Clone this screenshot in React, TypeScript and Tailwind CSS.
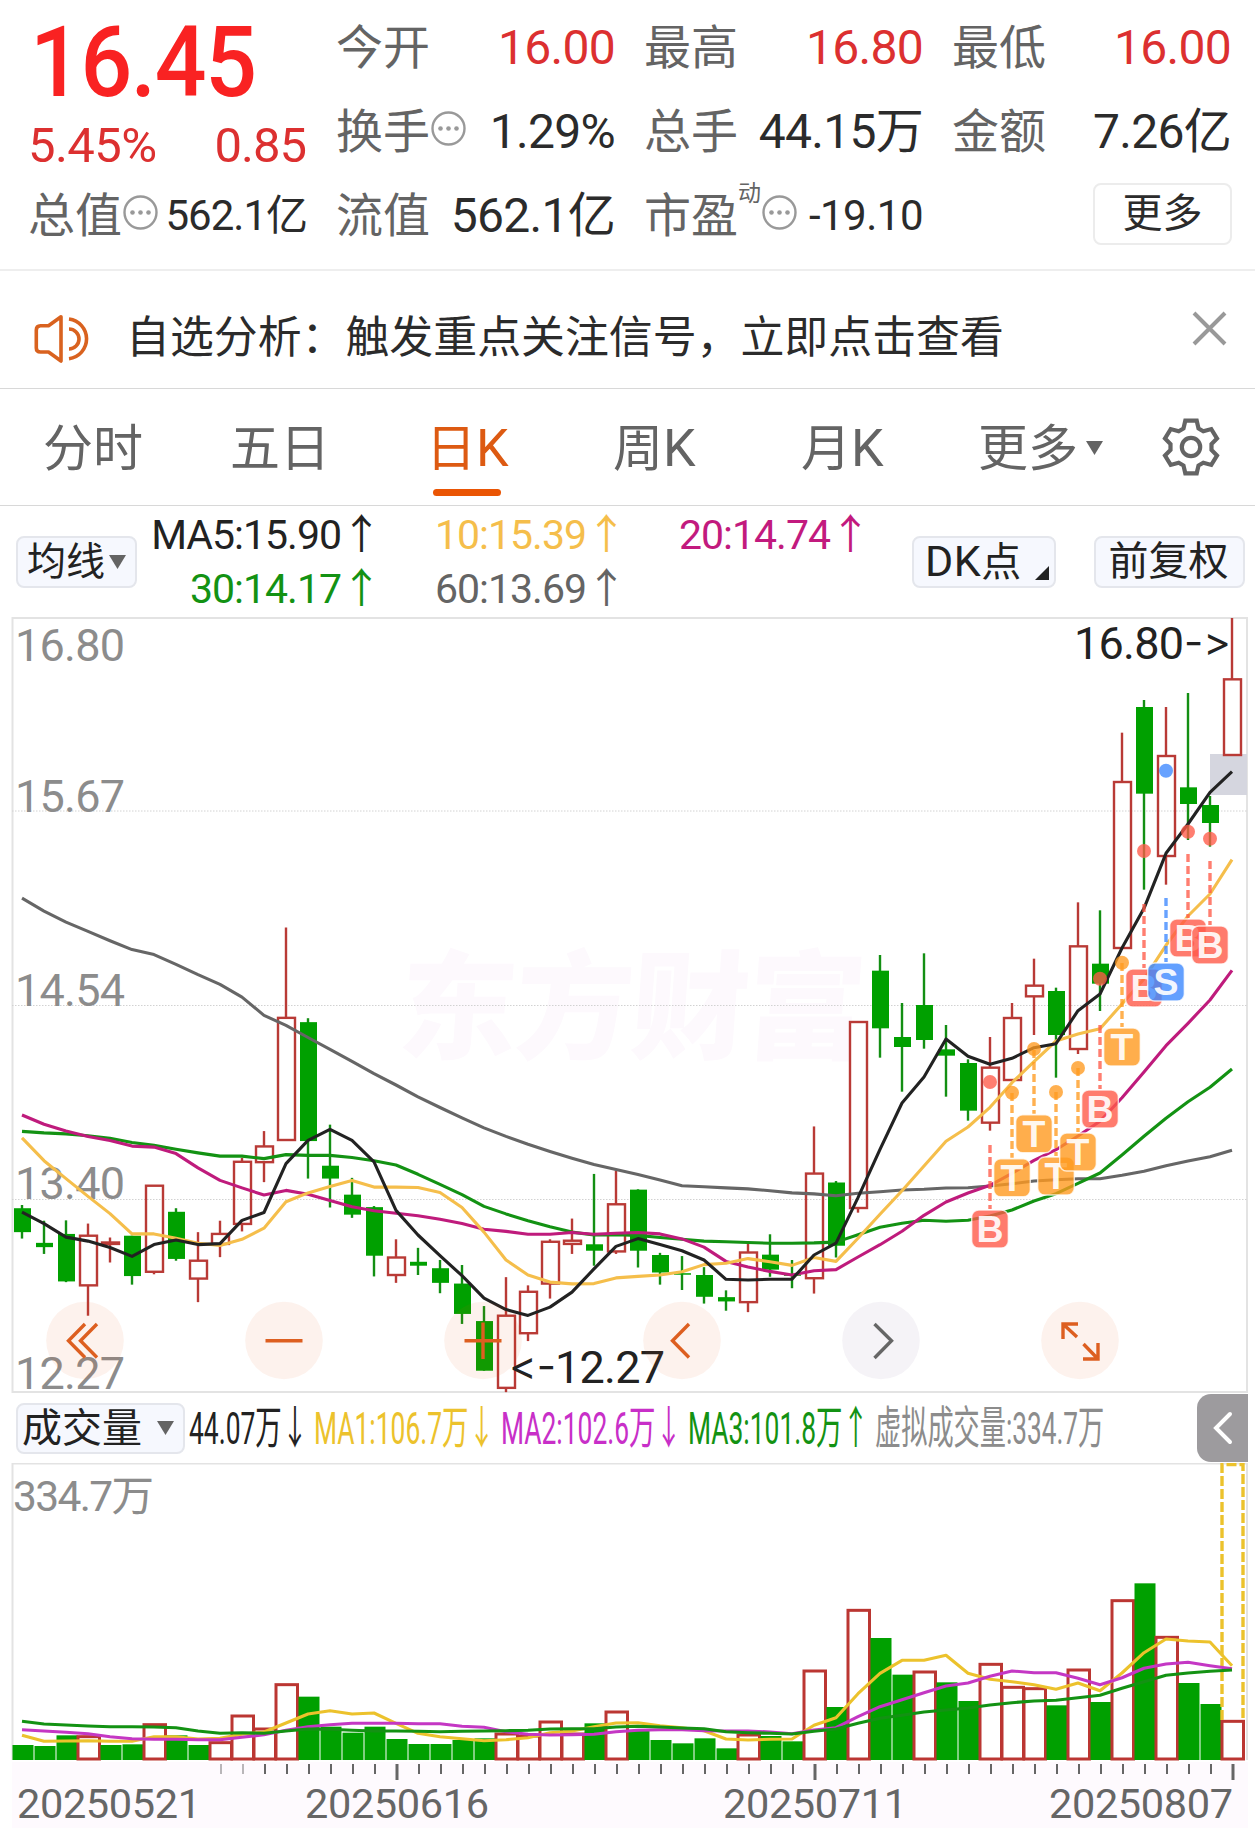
import type { ReactNode } from 'react';

const STEP = 22;
const cx = (i: number) => 22 + i * STEP;

// measured rows -> canvas y
const scale = (origin: number, k: number) => (v: number) => origin + v / k;
const lo = scale(850, 2.8);
const mid = scale(900, 3);
const hi = scale(600, 3);
const vy = scale(1380, 3);

// [type, high, bodyTop, bodyBottom, low]
type Candle = ['r' | 'g', number, number, number, number];

const conv = (f: (v: number) => number, rows: Candle[]): Candle[] =>
  rows.map(([t, a, b, c, d]) => [t, f(a), f(b), f(c), f(d)]);

const candles: Candle[] = [
  ...conv(lo, [
    ['g', 994, 1003, 1070, 1088],
    ['g', 1038, 1100, 1112, 1131],
    ['g', 1037, 1075, 1208, 1210],
    ['r', 1046, 1080, 1219, 1304],
    ['r', 1085, 1099, 1103, 1155],
    ['g', 1080, 1080, 1193, 1217],
    ['r', 938, 940, 1181, 1188],
    ['g', 1003, 1013, 1145, 1150],
    ['r', 1070, 1150, 1200, 1266],
    ['r', 1038, 1075, 1103, 1140],
    ['r', 862, 873, 1047, 1068],
    ['r', 787, 830, 874, 930],
    ['r', 217, 470, 812, 812],
    ['g', 471, 482, 815, 920],
    ['g', 769, 884, 920, 1001],
    ['g', 918, 965, 1021, 1030],
    ['g', 997, 1000, 1136, 1194],
    ['r', 1090, 1141, 1190, 1212],
    ['g', 1114, 1153, 1164, 1190],
    ['g', 1148, 1171, 1212, 1241],
    ['g', 1162, 1214, 1299, 1327],
    ['g', 1277, 1319, 1458, 1458],
    ['r', 1196, 1304, 1506, 1518],
    ['r', 1219, 1237, 1353, 1375],
    ['r', 1090, 1097, 1214, 1256],
    ['r', 1032, 1094, 1103, 1131],
    ['g', 907, 1104, 1122, 1164],
    ['r', 898, 992, 1124, 1131],
    ['g', 950, 951, 1122, 1169],
    ['g', 1128, 1134, 1183, 1217],
    ['g', 1137, 1185, 1189, 1232],
    ['g', 1168, 1190, 1251, 1270],
    ['g', 1233, 1252, 1264, 1290],
    ['r', 1103, 1127, 1266, 1294],
    ['g', 1076, 1133, 1175, 1195],
    ['g', 1148, 1188, 1191, 1227],
    ['r', 774, 906, 1199, 1242],
    ['g', 927, 931, 1108, 1141],
  ]),
  ...conv(mid, [
    ['r', 366, 366, 924, 938],
    ['g', 165, 212, 385, 473],
    ['g', 309, 411, 441, 575],
    ['g', 160, 315, 420, 446],
    ['g', 375, 448, 467, 590],
    ['g', 478, 489, 632, 662],
    ['r', 411, 503, 668, 692],
    ['r', 309, 354, 540, 541],
    ['r', 176, 257, 289, 405],
    ['g', 263, 273, 405, 533],
    ['r', 7, 139, 447, 462],
    ['g', 31, 191, 251, 333],
  ]),
  ...conv(hi, [
    ['r', 398, 546, 1044, 1046],
    ['g', 300, 321, 581, 869],
    ['r', 321, 468, 768, 854],
    ['g', 279, 562, 612, 720],
    ['g', 588, 615, 669, 740],
    ['r', 54, 238, 465, 465],
  ]),
];

const maLines = [
  {
    color: '#222222',
    ys: [
      ...[1014, 1046, 1084, 1095, 1113, 1138, 1105, 1092, 1105, 1102, 1037, 1015, 878, 813, 782, 813, 873, 1009, 1078, 1136, 1192, 1255, 1287, 1303, 1280, 1238, 1173, 1110, 1088, 1105, 1122, 1148, 1202, 1204, 1202, 1202, 1134, 1101].map(lo),
      ...[893, 748, 609, 531, 417, 469, 493, 475, 443, 431, 332, 282].map(mid),
      ...[1044, 925, 760, 672, 577, 515].map(hi),
    ],
  },
  {
    color: '#f5be4b',
    ys: [
      ...[806, 870, 920, 970, 1018, 1075, 1075, 1087, 1101, 1107, 1090, 1059, 985, 960, 942, 925, 944, 944, 945, 959, 1001, 1070, 1148, 1190, 1210, 1215, 1214, 1198, 1194, 1190, 1181, 1161, 1157, 1144, 1153, 1163, 1141, 1152].map(lo),
      ...[1015, 943, 872, 798, 724, 681, 622, 548, 485, 423, 402, 386].map(mid),
      ...[1212, 1137, 1036, 948, 882, 779].map(hi),
    ],
  },
  {
    color: '#bf1b7c',
    ys: [
      ...[742, 768, 787, 802, 813, 829, 832, 850, 890, 925, 946, 966, 953, 964, 981, 999, 1010, 1017, 1024, 1034, 1046, 1062, 1068, 1076, 1076, 1071, 1076, 1073, 1071, 1075, 1089, 1112, 1152, 1168, 1180, 1190, 1178, 1175].map(lo),
      ...[1071, 1034, 994, 946, 906, 879, 856, 820, 781, 749, 708, 664, 593, 516, 437, 370, 300, 211].map(mid),
    ],
  },
  {
    color: '#139213',
    ys: [
      ...[788, 792, 795, 800, 807, 819, 827, 838, 848, 857, 857, 864, 853, 855, 855, 861, 870, 882, 908, 936, 965, 998, 1019, 1038, 1055, 1070, 1078, 1077, 1079, 1085, 1090, 1095, 1097, 1099, 1101, 1101, 1100, 1098].map(lo),
      ...[1004, 982, 970, 961, 964, 961, 948, 930, 903, 881, 850, 819, 765, 709, 655, 605, 562, 507].map(mid),
    ],
  },
  {
    color: '#666666',
    ys: [
      ...[135, 171, 202, 228, 254, 279, 293, 320, 349, 376, 412, 463, 491, 525, 558, 592, 626, 658, 691, 721, 750, 778, 802, 824, 844, 863, 881, 895, 909, 924, 940, 943, 946, 949, 954, 960, 963, 968].map(lo),
      ...[880, 875, 870, 868, 864, 863, 858, 851, 843, 839, 836, 836, 826, 814, 797, 783, 770, 751].map(mid),
    ],
  },
];

const volumes = [
  1095, 1098, 1066, 1070, 1095, 1093, 1034, 1066, 1095, 1088, 1008, 1047, 914, 950, 1040, 1058, 1040, 1077, 1092, 1092,
  1080, 1075, 1062, 1068, 1026, 1062, 1030, 996, 1052, 1080, 1090, 1075, 1105, 1065, 1068, 1084, 873, 981, 691, 774,
  884, 876, 907, 963, 853, 922, 926, 976, 870, 966, 662, 610, 772, 909, 972, 1024,
].map(vy);

const volumeUp = [3, 6, 9, 10, 11, 12, 22, 23, 24, 25, 27, 33, 36, 38, 41, 44, 45, 46, 48, 50, 52, 55];

const volLines = [
  {
    color: '#ecc22c',
    ys: [1066, 1084, 1083, 1082, 1084, 1084, 1070, 1070, 1077, 1075, 1063, 1056, 1029, 1002, 992, 1002, 999, 1030, 1060, 1070, 1076, 1082, 1079, 1073, 1058, 1053, 1040, 1029, 1028, 1037, 1043, 1052, 1077, 1080, 1078, 1077, 1036, 1013, 941, 880, 841, 841, 826, 880, 898, 905, 914, 928, 909, 932, 879, 818, 777, 783, 786, 857],
  },
  {
    color: '#c437c4',
    ys: [1049, 1053, 1057, 1061, 1070, 1076, 1078, 1078, 1079, 1079, 1072, 1064, 1051, 1040, 1034, 1030, 1030, 1030, 1031, 1031, 1039, 1042, 1055, 1063, 1065, 1064, 1063, 1055, 1051, 1049, 1049, 1052, 1053, 1053, 1056, 1061, 1050, 1043, 1010, 980, 959, 938, 918, 909, 889, 873, 878, 878, 895, 914, 893, 865, 852, 847, 857, 866],
  },
  {
    color: '#139213',
    ys: [1024, 1032, 1035, 1038, 1040, 1040, 1041, 1043, 1053, 1060, 1058, 1060, 1053, 1047, 1048, 1051, 1053, 1053, 1054, 1055, 1054, 1053, 1052, 1051, 1047, 1046, 1046, 1041, 1039, 1041, 1044, 1046, 1055, 1058, 1060, 1062, 1054, 1047, 1030, 1015, 1006, 996, 990, 984, 975, 968, 963, 961, 953, 946, 925, 905, 886, 879, 874, 870],
  },
];

// [index, letter, dotY, dashTop, badgeY]
const signals: [number, string, number, number, number][] = [
  [44, 'B', 1082, 1145, 1229],
  [45, 'T', 1092.7, 1093, 1177.7],
  [46, 'T', 1049, 1050, 1133.7],
  [47, 'T', 1092, 1092, 1176],
  [48, 'T', 1068, 1068, 1152],
  [49, 'B', 978.7, 1025, 1109],
  [50, 'T', 962.7, 963, 1047],
  [51, 'B', 851, 904, 988],
  [52, 'S', 770.7, 898, 982],
  [53, 'B', 831.7, 854, 938],
  [54, 'B', 838.7, 861, 945],
];

const signalColor: Record<string, string> = { B: '#ff5a48', T: '#ff9a1f', S: '#3c88ff' };

const points = (ys: number[]) => ys.map((y, i) => `${cx(i)},${y.toFixed(1)}`).join(' ');

function Dots() {
  return (
    <svg className="mb-[7px] ml-[1px] h-[35px] w-[35px] shrink-0" viewBox="0 0 35 35">
      <circle cx="17.5" cy="17.5" r="16" fill="none" stroke="#999" strokeWidth="2.4" />
      <circle cx="9.5" cy="17.5" r="2.3" fill="#999" />
      <circle cx="17.5" cy="17.5" r="2.3" fill="#999" />
      <circle cx="25.5" cy="17.5" r="2.3" fill="#999" />
    </svg>
  );
}

function Stat({ label, value, valueClass = 'text-[48px] text-[#2b2b2b] tracking-[-0.7px]', dots, sup }: {
  label: string;
  value: string;
  valueClass?: string;
  dots?: boolean;
  sup?: string;
}) {
  return (
    <div className="flex h-[84px] items-center justify-between whitespace-nowrap leading-[84px]">
      <div className="flex items-center text-[47px] text-[#646464]">
        <span>{label}</span>
        {sup && <span className="mb-[44px] text-[23px] leading-[30px]">{sup}</span>}
        {dots && <Dots />}
      </div>
      <span className={valueClass}>{value}</span>
    </div>
  );
}

function Tab({ children, className }: { children: ReactNode; className: string }) {
  return <div className={`flex h-full shrink-0 items-center ${className}`}>{children}</div>;
}

function Fit({ children, box, text }: { children: ReactNode; box: string; text: string }) {
  return (
    <div className={`shrink-0 ${box}`}>
      <span className={`inline-block origin-left whitespace-nowrap ${text}`}>{children}</span>
    </div>
  );
}

function PriceChart() {
  return (
    <svg className="block h-[776px] w-[1255px] overflow-visible" viewBox="0 617 1255 776">
      <text x="398" y="1050" fontSize="118" fontWeight="900" fill="#fdf9fd" textLength="466" transform="skewX(-4) translate(72 0)">东方财富</text>
      <rect x="12.5" y="618" width="1234.5" height="774" fill="none" stroke="#e3e3e3" strokeWidth="2" />
      {[811, 1005.5, 1199.5].map((y) => (
        <line key={y} x1="12" x2="1247" y1={y} y2={y} stroke="#d2d2d2" strokeWidth="1" strokeDasharray="1.5 1.5" />
      ))}
      <g fontSize="45" fill="#8c8c8c">
        <text x="15" y="661" textLength="110">16.80</text>
        <text x="15" y="812" textLength="110">15.67</text>
        <text x="15" y="1006" textLength="110">14.54</text>
        <text x="15" y="1198.5" textLength="110">13.40</text>
        <text x="15" y="1388.5" textLength="110">12.27</text>
      </g>
      <rect x="1210" y="754" width="37" height="41" fill="#d5d6df" />

      {candles.map(([t, high, top, bottom, low], i) => {
        const x = cx(i);
        if (t === 'g') {
          return (
            <g key={i} fill="#00a000">
              <rect x={x - 1.2} y={high} width="2.4" height={low - high} fill="#138f13" />
              <rect x={x - 8} y={top} width="17" height={Math.max(bottom - top, 1.5)} />
            </g>
          );
        }
        return (
          <g key={i} fill="none" stroke="#b93a36" strokeWidth="2.4">
            <line x1={x} x2={x} y1={high} y2={top} />
            <line x1={x} x2={x} y1={bottom} y2={low} />
            <rect x={x - 8} y={top} width="17" height={bottom - top} />
          </g>
        );
      })}

      {[...maLines].reverse().map((l) => (
        <polyline key={l.color} points={points(l.ys)} fill="none" stroke={l.color} strokeWidth="3.1" strokeLinejoin="round" />
      ))}

      {signals.map(([i, letter, dotY, dashTop, badgeY]) => {
        const x = cx(i);
        const color = signalColor[letter];
        return (
          <g key={i}>
            <circle cx={x} cy={dotY} r="7" fill={color} fillOpacity="0.78" />
            <line x1={x} x2={x} y1={dashTop} y2={badgeY - 20} stroke={color} strokeOpacity="0.78" strokeWidth="3.4" strokeDasharray="8 4" />
            <rect x={x - 18.3} y={badgeY - 19} width="36.6" height="38" rx="7" fill={color} fillOpacity="0.8" stroke="#fff" strokeOpacity="0.75" strokeWidth="1.4" />
            <text x={x} y={badgeY + 13.3} textAnchor="middle" fontSize="37.5" fontWeight="700" fill="#fff" fillOpacity="0.92" fontFamily="Liberation Sans, sans-serif">{letter}</text>
          </g>
        );
      })}

      <g fill="#222" fontSize="45">
        <text x="1074" y="659" textLength="110">16.80</text>
        <text className="[font-feature-settings:'calt'_0,'liga'_0]" x="1184" y="656" fontSize="40" textLength="47" lengthAdjust="spacingAndGlyphs" fontFamily="Inter, sans-serif">-&gt;</text>
        <text className="[font-feature-settings:'calt'_0,'liga'_0]" x="509" y="1380" fontSize="40" textLength="47" lengthAdjust="spacingAndGlyphs" fontFamily="Inter, sans-serif">&lt;-</text>
        <text x="555" y="1383" textLength="110">12.27</text>
      </g>

      {/* floating chart controls */}
      {[85, 284, 483, 682, 1080].map((x) => (
        <circle key={x} cx={x} cy="1340.5" r="38.8" fill="#e8500a" fillOpacity="0.075" />
      ))}
      <circle cx="881" cy="1340.5" r="38.8" fill="#4a2a6a" fillOpacity="0.055" />
      <g fill="none" stroke="#dd5f20" strokeWidth="3.4">
        <path d="M85 1324 L68.5 1340.7 L85 1357.5 M97 1324 L80.5 1340.7 L97 1357.5" />
        <path d="M265.5 1340.7 H302.5" />
        <path d="M464.5 1340.7 H501.5 M483 1322.5 V1359" />
        <path d="M689 1324 L672.5 1340.7 L689 1357.5" />
        <path d="M874.5 1324 L891.5 1340.7 L874.5 1358" stroke="#666" />
        <path d="M1078 1324 H1063 V1339 M1063 1324 L1077 1337 M1083 1359 H1098 V1343 M1098 1359 L1083.5 1344" />
      </g>
    </svg>
  );
}

function VolumeChart() {
  return (
    <svg className="block h-[365px] w-[1255px]" viewBox="0 1463 1255 365">
      <rect x="12" y="1762" width="1236" height="66" fill="#fefafe" />
      <path d="M12.5 1760 V1463.5 H1247 V1760" fill="none" stroke="#e3e3e3" strokeWidth="2" />
      <text x="13" y="1511" fontSize="42.5" fill="#8c8c8c" textLength="141">334.7万</text>

      {volumes.map((y, i) =>
        volumeUp.includes(i) ? (
          <rect key={i} x={cx(i) - 10} y={y} width="21.5" height={1759 - y} fill="#fff" stroke="#bb3632" strokeWidth="3" />
        ) : (
          <rect key={i} x={cx(i) - 9.5} y={y} width="21" height={1760 - y} fill="#00a000" />
        ),
      )}
      <path d="M1222 1720 V1464.5 H1243 V1720" fill="none" stroke="#ecc22c" strokeWidth="3.4" strokeDasharray="10 3" />

      {volLines.map((l) => (
        <polyline key={l.color} points={points(l.ys.map(vy))} fill="none" stroke={l.color} strokeWidth="3.1" strokeLinejoin="round" />
      ))}

      {volumes.map((_, i) => {
        if (i < 9) return null;
        const major = i === 17 || i === 36 || i === 55;
        return (
          <line
            key={i}
            x1={cx(i) + 1}
            x2={cx(i) + 1}
            y1="1764"
            y2={major ? 1780 : 1774}
            stroke="#666"
            strokeWidth={major ? 3 : 2}
            opacity={i < 11 ? 0.45 : 1}
          />
        );
      })}
      <g fontSize="41.5" fill="#666">
        <text x="17" y="1818" textLength="184">20250521</text>
        <text x="305" y="1818" textLength="184">20250616</text>
        <text x="723" y="1818" textLength="184">20250711</text>
        <text x="1049" y="1818" textLength="184">20250807</text>
      </g>
    </svg>
  );
}

export default function App() {
  return (
    <div className="h-[1828px] w-[1255px] overflow-hidden bg-white font-['Roboto','Noto_Sans_CJK_SC',sans-serif]">
      {/* quote header */}
      <header className="grid h-[271px] grid-cols-[279px_279px_279px_279px] gap-x-[29px] border-b-2 border-[#eeeeee] pl-[28px] pt-[6px]">
        <div>
          <div className="h-[112px] pl-[2px] pt-[2px] leading-[110px]">
            <span className="inline-block origin-left scale-x-[0.93] text-[98px] font-medium leading-[110px] tracking-[-1.5px] text-[#f92222]">16.45</span>
          </div>
          <div className="flex h-[56px] items-center justify-between text-[49px] leading-[56px] text-[#dc3030]">
            <span className="tracking-[-0.6px]">5.45%</span>
            <span className="pr-[1px] tracking-[-1px]">0.85</span>
          </div>
          <Stat label="总值" value="562.1亿" dots valueClass="text-[42px] text-[#2b2b2b] tracking-[-1px]" />
        </div>
        <div>
          <Stat label="今开" value="16.00" valueClass="text-[48px] text-[#dc3030] tracking-[-0.7px]" />
          <Stat label="换手" value="1.29%" dots valueClass="text-[48px] text-[#2b2b2b] tracking-[-0.7px]" />
          <Stat label="流值" value="562.1亿" />
        </div>
        <div>
          <Stat label="最高" value="16.80" valueClass="text-[48px] text-[#dc3030] tracking-[-0.7px]" />
          <Stat label="总手" value="44.15万" />
          <Stat label="市盈" value="-19.10" sup="动" dots valueClass="text-[42px] text-[#2b2b2b] tracking-[-0.5px]" />
        </div>
        <div>
          <Stat label="最低" value="16.00" valueClass="text-[48px] text-[#dc3030] tracking-[-0.7px]" />
          <Stat label="金额" value="7.26亿" />
          <div className="-mr-[1px] flex h-[80px] items-center justify-end">
            <button className="h-[62px] w-[139px] rounded-lg border-2 border-[#ececec] text-[40px] leading-[58px] text-[#2b2b2b]">更多</button>
          </div>
        </div>
      </header>

      {/* notice */}
      <div className="flex h-[118px] items-center border-b border-[#d8d8d8] pl-[33px] pr-[27px] pt-[17px]">
        <svg className="mt-[1px] h-[50px] w-[60px]" viewBox="32 314 60 50" fill="none" stroke="#d9621f" strokeWidth="3.6">
          <path d="M60 316.8 L47.5 325.7 H39.5 Q35.3 325.7 35.3 330 V348 Q35.3 352 39.5 352 H47.5 L60 361 Z" strokeLinejoin="round" />
          <path d="M68 319 A20 20 0 0 1 68 358.7 M68 329 A10 10 0 0 1 68 349" />
        </svg>
        <p className="ml-[33px] whitespace-nowrap text-[43.9px] leading-[60px] text-[#2b2b2b]">自选分析：触发重点关注信号，立即点击查看</p>
        <svg className="mb-[19px] ml-auto h-[37px] w-[37px]" viewBox="0 0 37 37" stroke="#999" strokeWidth="4">
          <path d="M3 3 L34 34 M34 3 L3 34" />
        </svg>
      </div>

      {/* period tabs */}
      <nav className="flex h-[117px] items-center border-b border-[#d8d8d8] pl-[43px] text-[50px] leading-[60px] text-[#646464]">
        <Tab className="w-[187px] pt-[3px]">分时</Tab>
        <Tab className="w-[196px] pt-[3px]">五日</Tab>
        <Tab className="relative w-[187px] pt-[3px] text-[#dd5a12]">
          日<span className="text-[52px]">K</span>
          <span className="absolute bottom-[9px] left-[7px] h-[7px] w-[68px] rounded-full bg-[#ea5504]" />
        </Tab>
        <Tab className="w-[188px] pt-[3px]">周<span className="text-[52px]">K</span></Tab>
        <Tab className="w-[177px] pt-[3px]">月<span className="text-[52px]">K</span></Tab>
        <Tab className="w-[183px] pt-[3px]">
          更多
          <svg className="mb-[2px] ml-[8px] h-[14px] w-[17px]" viewBox="0 0 17 14" fill="#646464"><path d="M0 0 H17 L8.5 14 Z" /></svg>
        </Tab>
        <svg className="h-[60px] w-[60px]" viewBox="-30 -30 60 60" fill="none" stroke="#646464" strokeWidth="4.2">
          <path d="M-5.7 -26.3 H5.7 L7.5 -18.5 L12.3 -15.7 L20.3 -17.9 L26 -8.6 L20.5 -3 V3 L26 8.6 L20.3 17.9 L12.3 15.7 L7.5 18.5 L5.7 26.3 H-5.7 L-7.5 18.5 L-12.3 15.7 L-20.3 17.9 L-26 8.6 L-20.5 3 V-3 L-26 -8.6 L-20.3 -17.9 L-12.3 -15.7 L-7.5 -18.5 Z" />
          <circle r="9.2" />
        </svg>
      </nav>

      {/* moving averages */}
      <section className="flex h-[111px] items-start pl-[16px]">
        <button className="mt-[30px] flex h-[52px] w-[121px] shrink-0 items-center rounded-lg border-2 border-[#e4e6ec] bg-[#f6f8fe] pl-[9px] text-[39px] leading-[48px] text-[#222]">
          均线
          <svg className="ml-[4px] h-[14px] w-[17px]" viewBox="0 0 17 14" fill="#646464"><path d="M0 0 H17 L8.5 14 Z" /></svg>
        </button>
        <div className="grid w-[775px] shrink-0 grid-cols-[244px_245px_244px] pt-[2px] text-right text-[41px] leading-[54px] tracking-[-1px]">
          <div className="whitespace-nowrap text-[#222]">MA5:15.90↑</div>
          <div className="text-[#f5be4b]">10:15.39↑</div>
          <div className="text-[#c21a7e]">20:14.74↑</div>
          <div className="text-[#139213]">30:14.17↑</div>
          <div className="text-[#646464]">60:13.69↑</div>
        </div>
        <button className="mt-[30px] flex h-[52px] w-[144px] shrink-0 items-center justify-between whitespace-nowrap rounded-lg border-2 border-[#e4e6ec] bg-[#f6f8fe] pl-[11px] pr-[5px] text-[40px] leading-[48px] text-[#222]">
          <span><span className="text-[43px] tracking-[0.5px]">DK</span>点</span>
          <svg className="mt-[22px] h-[14px] w-[14px] shrink-0" viewBox="0 0 14 14" fill="#222"><path d="M14 0 V14 H0 Z" /></svg>
        </button>
        <button className="ml-[38px] mt-[30px] h-[52px] w-[151px] shrink-0 rounded-lg border-2 border-[#e4e6ec] bg-[#f6f8fe] pr-[2px] text-[40px] leading-[48px] text-[#222]">前复权</button>
      </section>

      <PriceChart />

      {/* volume legend */}
      <section className="flex h-[70px] items-center pl-[16px]">
        <button className="flex h-[51px] w-[169px] shrink-0 items-center rounded-lg border-2 border-[#e4e6ec] bg-[#f6f8fe] pl-[4px] text-[40px] leading-[47px] text-[#222]">
          成交量
          <svg className="ml-[15px] h-[14px] w-[17px]" viewBox="0 0 17 14" fill="#646464"><path d="M0 0 H17 L8.5 14 Z" /></svg>
        </button>
        <div className="flex items-center pl-[4px] pt-[1px] text-[45px] leading-[60px]">
          <Fit box="w-[125px] text-[#222]" text="scale-x-[0.587]">44.07万↓</Fit>
          <Fit box="w-[187px] text-[#ecc22c]" text="scale-x-[0.587]">MA1:106.7万↓</Fit>
          <Fit box="w-[187px] text-[#c82fc8]" text="scale-x-[0.587]">MA2:102.6万↓</Fit>
          <Fit box="w-[187px] text-[#139213]" text="scale-x-[0.587]">MA3:101.8万↑</Fit>
          <Fit box="w-[322px] text-[#8c8c8c]" text="scale-x-[0.582]">虚拟成交量:334.7万</Fit>
        </div>
        <div className="mb-[1px] flex h-[68px] w-[51px] shrink-0 items-center justify-center rounded-l-[14px] bg-[#9d9b9e]">
          <svg className="h-[36px] w-[22px]" viewBox="0 0 22 36" fill="none" stroke="#fff" strokeWidth="4" strokeLinecap="round">
            <path d="M18 4 L4 18 L18 32" />
          </svg>
        </div>
      </section>

      <VolumeChart />
    </div>
  );
}
